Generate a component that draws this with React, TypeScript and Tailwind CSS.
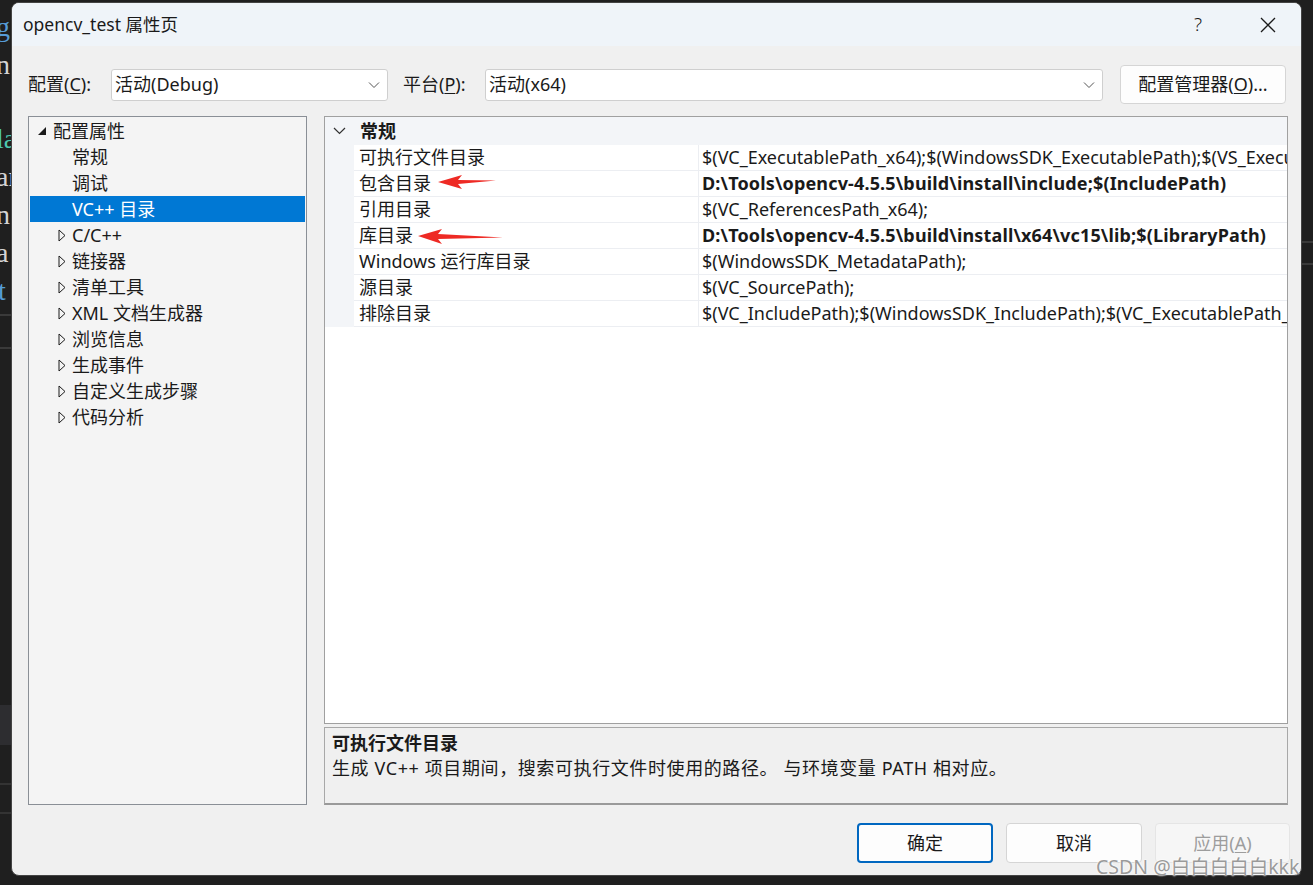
import React from 'react';

const UI = "font-['Noto_Sans','Noto_Sans_CJK_SC',sans-serif]";

const treeItems: { label: string; level: 0 | 1; kind: 'open' | 'closed' | 'leaf'; selected?: boolean }[] = [
  { label: '配置属性', level: 0, kind: 'open' },
  { label: '常规', level: 1, kind: 'leaf' },
  { label: '调试', level: 1, kind: 'leaf' },
  { label: 'VC++ 目录', level: 1, kind: 'leaf', selected: true },
  { label: 'C/C++', level: 1, kind: 'closed' },
  { label: '链接器', level: 1, kind: 'closed' },
  { label: '清单工具', level: 1, kind: 'closed' },
  { label: 'XML 文档生成器', level: 1, kind: 'closed' },
  { label: '浏览信息', level: 1, kind: 'closed' },
  { label: '生成事件', level: 1, kind: 'closed' },
  { label: '自定义生成步骤', level: 1, kind: 'closed' },
  { label: '代码分析', level: 1, kind: 'closed' },
];

const props: { name: string; value: string; bold?: boolean }[] = [
  { name: '可执行文件目录', value: '$(VC_ExecutablePath_x64);$(WindowsSDK_ExecutablePath);$(VS_ExecutablePath);$(MSBuild_ExecutablePath)' },
  { name: '包含目录', value: 'D:\\Tools\\opencv-4.5.5\\build\\install\\include;$(IncludePath)', bold: true },
  { name: '引用目录', value: '$(VC_ReferencesPath_x64);' },
  { name: '库目录', value: 'D:\\Tools\\opencv-4.5.5\\build\\install\\x64\\vc15\\lib;$(LibraryPath)', bold: true },
  { name: 'Windows 运行库目录', value: '$(WindowsSDK_MetadataPath);' },
  { name: '源目录', value: '$(VC_SourcePath);' },
  { name: '排除目录', value: '$(VC_IncludePath);$(WindowsSDK_IncludePath);$(VC_ExecutablePath_x64);$(VC_LibraryPath_x64)' },
];

function Chevron() {
  return (
    <svg width="12" height="8" viewBox="0 0 12 8" className="shrink-0">
      <polyline points="1,1.5 6,6.5 11,1.5" fill="none" stroke="#555" strokeWidth="1" />
    </svg>
  );
}

function Combo({ text, width }: { text: string; width: string }) {
  return (
    <div className={`${width} h-[32px] bg-white border border-[#cfcfcf] rounded-[3px] flex items-center justify-between pl-[3px] pr-[7px] text-[18px] text-[#1a1a1a]`}>
      <span>{text}</span>
      <Chevron />
    </div>
  );
}

function TreeIcon({ kind }: { kind: 'open' | 'closed' | 'leaf' }) {
  if (kind === 'open')
    return (
      <svg width="10" height="10" viewBox="0 0 10 10">
        <polygon points="9,1 9,9 1,9" fill="#1a1a1a" />
      </svg>
    );
  if (kind === 'closed')
    return (
      <svg width="8" height="13" viewBox="0 0 8 13">
        <polygon points="1,1 7,6.5 1,12" fill="none" stroke="#1a1a1a" strokeWidth="1" />
      </svg>
    );
  return null;
}

export default function App() {
  return (
    <div className={`relative w-[1313px] h-[885px] bg-[#1f1f1f] flex overflow-hidden ${UI}`}>
      {/* editor behind the dialog */}
      <div className="w-[11px] shrink-0 overflow-hidden flex flex-col font-['Liberation_Serif',serif] text-[28px] leading-[38px] whitespace-nowrap">
        <div className="h-[8px]" />
        <span className="text-[#569cd6] -ml-[4px]">g</span>
        <span className="text-[#d4d4d4] -ml-[4px]">n</span>
        <span className="h-[36px]" />
        <span className="text-[#4ec9b0] -ml-[4px]">la</span>
        <span className="text-[#d4d4d4] -ml-[4px]">ar</span>
        <span className="text-[#d4d4d4] -ml-[4px]">n</span>
        <span className="text-[#d4d4d4] -ml-[4px]">a</span>
        <span className="text-[#569cd6] -ml-[2px]">t</span>
        <div className="h-[2px] bg-[#3a3a3a] mt-[4px]" />
        <div className="h-[31px]" />
        <div className="h-[2px] bg-[#3a3a3a]" />
        <div className="h-[356px]" />
        <div className="h-[40px] bg-[#2d2d30]" />
        <div className="h-[38px]" />
        <div className="h-[2px] bg-[#333]" />
        <div className="h-[27px]" />
        <div className="h-[2px] bg-[#333]" />
      </div>

      {/* dialog */}
      <div className="mt-[2px] w-[1291px] h-[874px] shrink-0 rounded-[8px] overflow-hidden bg-[#f0f0f0] flex flex-col border border-[#444]">
        <div className="h-[43px] bg-[#eff4f9] flex items-center pl-[11px] text-[17.5px] text-[#1a1a1a] shrink-0">
          <span className="flex-1">opencv_test 属性页</span>
          <span className="text-[19px] w-[20px] text-center mr-[52px] font-light">?</span>
          <svg width="16" height="16" viewBox="0 0 16 16" className="mr-[25px]">
            <path d="M1 1 L15 15 M15 1 L1 15" stroke="#1a1a1a" strokeWidth="1.3" />
          </svg>
        </div>

        {/* config row */}
        <div className="flex items-center h-[39px] mt-[19px] pl-[16px] text-[18px] text-[#1a1a1a] shrink-0">
          <span className="w-[83px]">
            配置(<span className="underline underline-offset-2">C</span>):
          </span>
          <Combo text="活动(Debug)" width="w-[277px]" />
          <span className="w-[82px] ml-[15px]">
            平台(<span className="underline underline-offset-2">P</span>):
          </span>
          <Combo text="活动(x64)" width="w-[618px]" />
          <button className="ml-[17px] w-[166px] h-[39px] bg-[#fdfdfd] border border-[#d5d5d5] rounded-[4px] text-[18px] text-[#1a1a1a]">
            配置管理器(<span className="underline underline-offset-2">O</span>)...
          </button>
        </div>

        {/* main */}
        <div className="flex mt-[12px] pl-[16px] h-[689px] shrink-0">
          <div className="w-[279px] h-full border border-[#8a8f96] bg-[#f4f4f4] pt-[1px] pl-[1px] pr-[1px]">
            {treeItems.map((t) => (
              <div
                key={t.label}
                className={`h-[26px] flex items-center text-[18px] ${
                  t.selected ? 'bg-[#0078d4] text-white' : 'text-[#1a1a1a]'
                }`}
              >
                <div className={`flex items-center ${t.level === 0 ? 'w-[23px] pl-[7px]' : 'w-[42px] pl-[28px]'}`}>
                  <TreeIcon kind={t.kind} />
                </div>
                <span>{t.label}</span>
              </div>
            ))}
          </div>

          <div className="ml-[17px] w-[964px] flex flex-col gap-[3px]">
            <div className="h-[608px] border border-[#a0a0a0] bg-white overflow-hidden">
              <div className="h-[28px] bg-[#f3f5f8] flex items-center text-[18px] font-bold text-[#1a1a1a]">
                <div className="w-[35px] pl-[8px] flex items-center">
                  <svg width="13" height="8" viewBox="0 0 13 8">
                    <polyline points="1,1 6.5,6.5 12,1" fill="none" stroke="#333" strokeWidth="1.2" />
                  </svg>
                </div>
                <span>常规</span>
              </div>
              {props.map((p) => (
                <div key={p.name} className="h-[26px] flex bg-[#f3f5f8] text-[18px] text-[#1a1a1a]">
                  <div className="w-[29px] shrink-0" />
                  <div className="w-[344px] shrink-0 bg-white border-b border-[#eceef2] pl-[5px] flex items-center whitespace-nowrap">
                    {p.name}
                  </div>
                  <div
                    className={`flex-1 min-w-0 bg-white border-b border-l border-[#eceef2] pl-[3px] flex items-center whitespace-nowrap overflow-hidden ${
                      p.bold ? 'font-bold tracking-[0.15px]' : ''
                    }`}
                  >
                    {p.value}
                  </div>
                </div>
              ))}
            </div>
            <div className="flex-1 border border-[#a8a8a8] border-b-2 border-b-[#9a9a9a] bg-[#f0f0f0] px-[7px] pt-[3px] text-[18px] text-[#1a1a1a] leading-[25px]">
              <div className="font-bold">可执行文件目录</div>
              <div className="tracking-[0.6px]">生成 VC++ 项目期间，搜索可执行文件时使用的路径。 与环境变量 PATH 相对应。</div>
            </div>
          </div>
        </div>

        {/* buttons */}
        <div className="flex justify-end gap-[13px] mt-[18px] pr-[11px] shrink-0">
          <button className="w-[136px] h-[40px] rounded-[4px] bg-[#fdfdfd] border-2 border-[#0067c0] text-[18px] text-[#1a1a1a]">
            确定
          </button>
          <button className="w-[136px] h-[40px] rounded-[4px] bg-[#fdfdfd] border border-[#d5d5d5] text-[18px] text-[#1a1a1a]">
            取消
          </button>
          <button className="w-[135px] h-[40px] rounded-[4px] bg-[#f6f6f6] border border-[#e5e5e5] text-[18px] text-[#9d9d9d]">
            应用(<span className="underline underline-offset-2">A</span>)
          </button>
        </div>
      </div>

      <div className="w-[11px] shrink-0 flex flex-col">
        <div className="h-[241px]" />
        <div className="h-[2px] bg-[#3a3a3a]" />
        <div className="h-[20px]" />
        <div className="h-[2px] bg-[#3a3a3a]" />
      </div>

      {/* annotation arrows */}
      <svg className="absolute left-0 top-0 pointer-events-none" width="1313" height="885">
        <polygon points="438,182 462,175 458,180 496,180.5 458,184 462,189" fill="#ee2a24" />
        <polygon points="418,236 442,229 438,234 503,237.5 438,239 442,244" fill="#ee2a24" />
      </svg>

      {/* watermark */}
      <div className="absolute left-[1096px] top-[852px] text-[19.5px] text-[#9a9a9a] whitespace-nowrap [text-shadow:0_0_2px_#fff,0_0_2px_#fff]">
        CSDN @白白白白白kkk
      </div>
    </div>
  );
}
